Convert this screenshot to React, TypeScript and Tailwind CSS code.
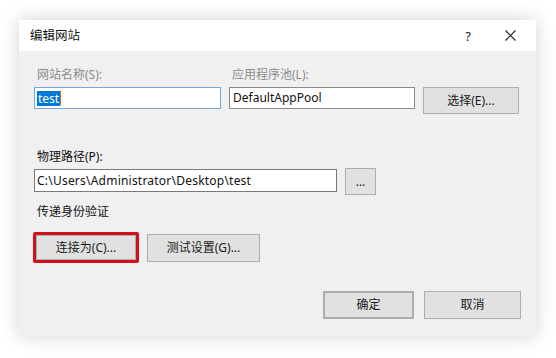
import React from "react";

const font = { fontFamily: '"Noto Sans", "Noto Sans CJK SC", sans-serif' };

function Btn({ children, className = "" }: { children: React.ReactNode; className?: string }) {
  return (
    <div
      className={`flex items-center justify-center bg-[#e1e1e1] border border-[#adadad] text-[12px] text-[#1a1a1a] ${className}`}
    >
      {children}
    </div>
  );
}

export default function App() {
  return (
    <div className="w-[556px] h-[358px] bg-white pt-[20px] pl-[19px] text-[12px] leading-[16px]" style={font}>
      <div className="w-[517px] h-[316px] flex flex-col shadow-[0_0_18px_rgba(0,0,0,0.18)]">
        {/* title bar */}
        <div className="h-[31px] bg-white flex items-center pl-[11px] pr-[18px]">
          <span className="text-[12.5px] text-[#111]">编辑网站</span>
          <span className="ml-auto mr-[34px] text-[13px] text-[#222]">?</span>
          <svg width="11" height="11" viewBox="0 0 11 11" className="mr-[2px]">
            <path d="M0.5 0.5 L10.5 10.5 M10.5 0.5 L0.5 10.5" stroke="#222" strokeWidth="1.1" />
          </svg>
        </div>
        {/* body */}
        <div className="flex-1 bg-[#f0f0f0] flex flex-col px-[15px] pt-[16px]">
          <div className="flex items-start">
            <div className="flex flex-col w-[187px]">
              <span className="pl-[3px] text-[#8a8a8a]">网站名称(S):</span>
              <div className="mt-[4px] h-[22px] border border-[#7aa7d9] bg-white flex items-center pl-[2px]">
                <span className="bg-[#0078d7] text-white leading-[15px] px-[1px]">test</span>
                <span className="w-[1px] h-[14px] bg-[#d96a1a]" />
              </div>
            </div>
            <div className="flex flex-col w-[186px] ml-[8px]">
              <span className="pl-[3px] text-[#8a8a8a]">应用程序池(L):</span>
              <div className="mt-[4px] h-[22px] border border-[#8a8a8a] bg-white flex items-center pl-[3px] text-[#111]">
                DefaultAppPool
              </div>
            </div>
            <Btn className="ml-[8px] mt-[20px] w-[96px] h-[27px]">选择(E)...</Btn>
          </div>

          <span className="mt-[35px] pl-[3px] text-[#111]">物理路径(P):</span>
          <div className="flex items-start mt-[4px]">
            <div className="w-[303px] h-[23px] border border-[#7a7a7a] bg-white flex items-center pl-[2px] text-[#111] tracking-[0.22px]">
              C:\Users\Administrator\Desktop\test
            </div>
            <Btn className="ml-[8px] -mt-[1px] w-[31px] h-[27px]">...</Btn>
          </div>

          <span className="mt-[9px] pl-[3px] text-[#111]">传递身份验证</span>

          <div className="flex items-center mt-[12px] -ml-[1px]">
            <div className="border-[3px] border-[#d0111b] rounded-[2px] w-[106px] h-[31px] flex">
              <Btn className="flex-1">连接为(C)...</Btn>
            </div>
            <Btn className="ml-[8px] w-[113px] h-[28px]">测试设置(G)...</Btn>
          </div>

          <div className="flex justify-end mt-[28px] pr-[0px]">
            <Btn className="w-[91px] h-[28px] border-2 border-[#0078d7]">确定</Btn>
            <Btn className="ml-[10px] w-[97px] h-[28px]">取消</Btn>
          </div>
        </div>
      </div>
    </div>
  );
}
